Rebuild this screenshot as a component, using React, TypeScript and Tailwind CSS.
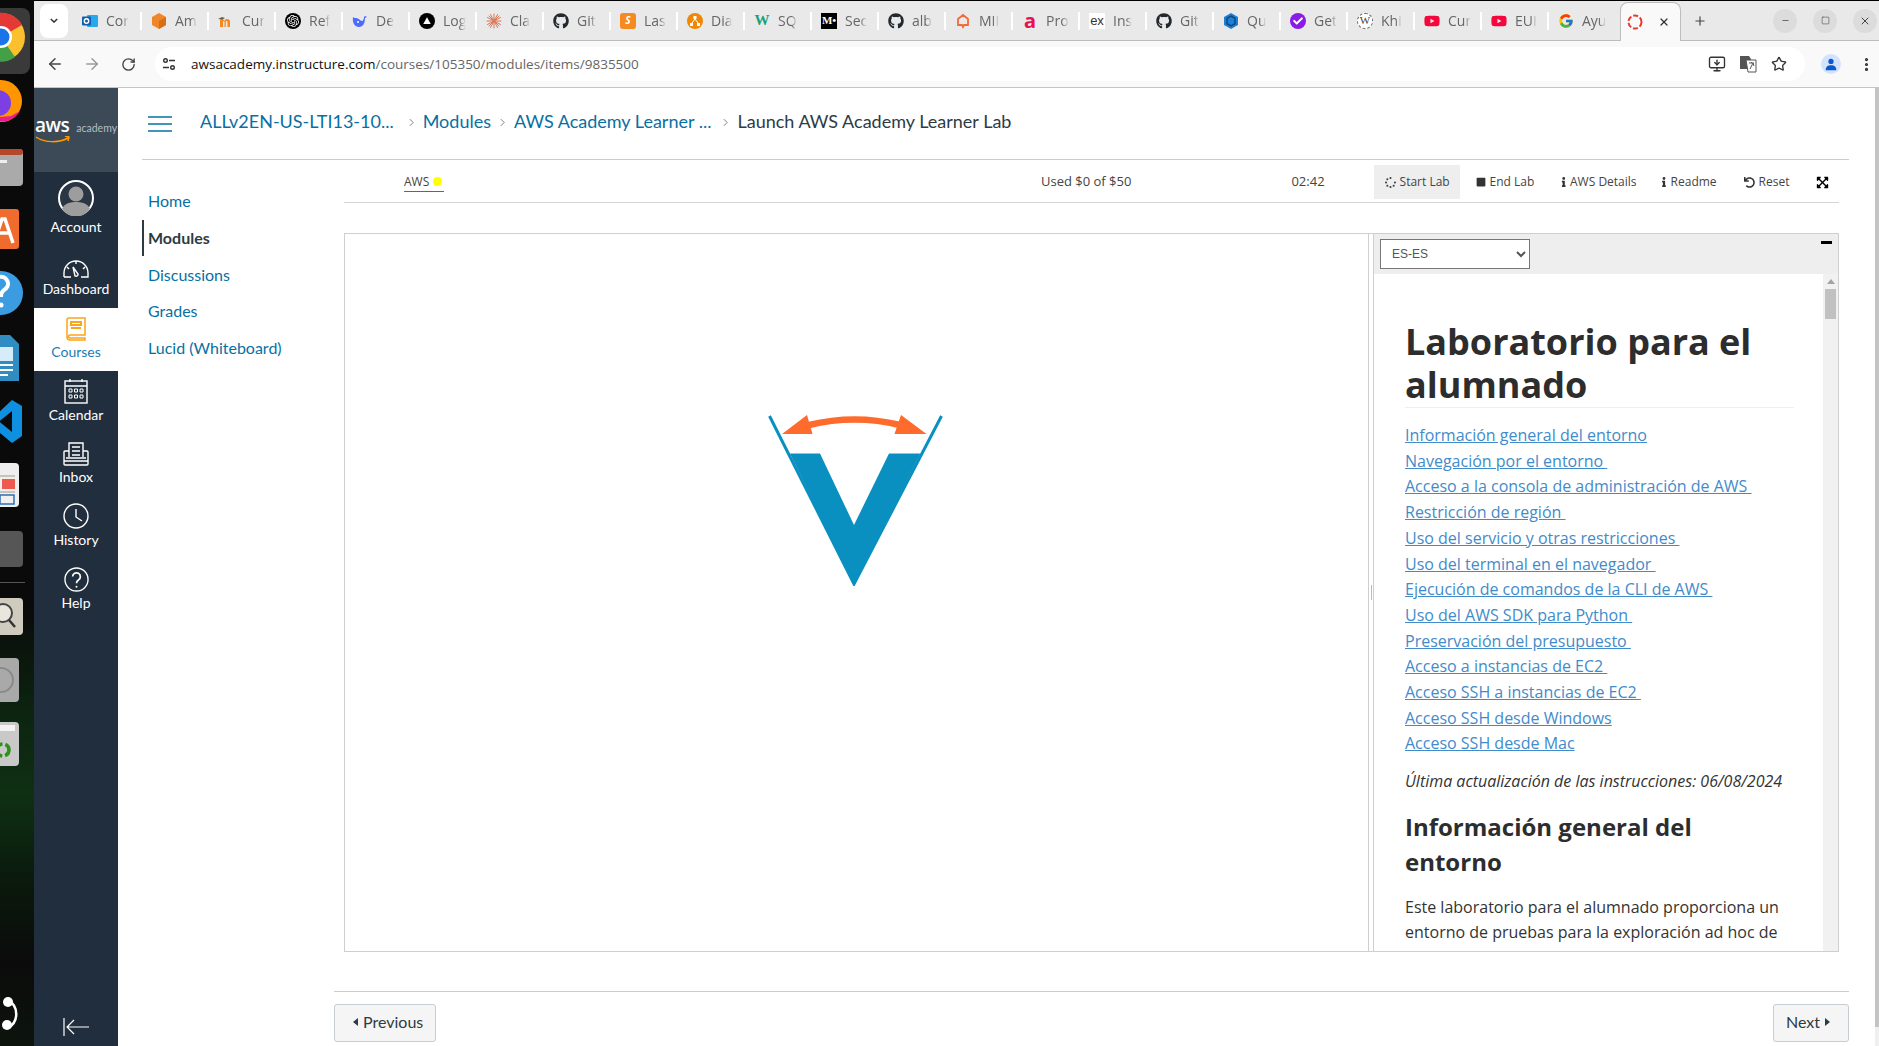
import type { ReactNode } from "react";
import { ArrowLeft, ArrowRight, RotateCw, MonitorDown, Star, EllipsisVertical, X, Plus, Minus, Square } from "lucide-react";
import { FaGithub, FaYoutube, FaSpinner, FaStop, FaInfo, FaUndo, FaExpandArrowsAlt, FaCheck } from "react-icons/fa";
import { FcGoogle } from "react-icons/fc";
import { SiOpenai } from "react-icons/si";

const lato = "font-['Lato',sans-serif]";
const openSans = "font-['Open_Sans',sans-serif]";

const Outlook = () => (
  <svg viewBox="0 0 16 16" className="w-4 h-4">
    <rect x="5" y="2" width="11" height="12" rx="1" fill="#28a8ea" />
    <rect x="0" y="3.5" width="9" height="9" rx="1" fill="#0f5fb0" />
    <circle cx="4.5" cy="8" r="2.2" fill="none" stroke="#fff" strokeWidth="1.4" />
  </svg>
);
const Cube = () => (
  <svg viewBox="0 0 16 16" className="w-4 h-4">
    <path d="M8 0l7 4v8l-7 4-7-4V4z" fill="#f0862a" />
    <path d="M8 8l7-4v8l-7 4z" fill="#d96d12" />
  </svg>
);
const Moodle = () => (
  <svg viewBox="0 0 16 16" className="w-4 h-4">
    <path d="M2 14V8c0-1.5 1-2 2-2s2 .5 2.5 2c.5-1.500 1.500-2 2.500-2 1.500 0 3 .8 3 2.500V14h-2.500V9c0-.6-.3-1-.8-1s-.9.4-.9 1v5H6.500V9c0-.6-.3-1-.8-1S5 8.400 5 9v5z" fill="#f5881f" />
    <path d="M0 6l4-2 3 1-3 1.500z" fill="#6b5a48" />
  </svg>
);
const Knot = () => (
  <span className="w-4 h-4 rounded-full bg-black flex items-center justify-center text-white text-[12px]">
    <SiOpenai />
  </span>
);
const Whale = () => (
  <svg viewBox="0 0 16 16" className="w-4 h-4">
    <path d="M1 4c1 1 2 1 3 1 3 0 4 3 6 3 1 0 2-2 2-4l1-1 2 1-2 1c0 5-2 9-6 9-4 0-7-4-6-10z" fill="#4d6bfe" />
    <circle cx="6" cy="9" r="1" fill="#fff" />
  </svg>
);
const Triangle = () => (
  <span className="w-4 h-4 rounded-full bg-black flex items-center justify-center">
    <svg viewBox="0 0 16 16" className="w-3 h-3"><path d="M8 3l5 9H3z" fill="#fff" /></svg>
  </span>
);
const Burst = () => (
  <svg viewBox="0 0 16 16" className="w-4 h-4" stroke="#d97757" strokeWidth="1" strokeLinecap="round">
    <path d="M8 1v14M1 8h14M3 3l10 10M13 3L3 13M4.500 1.500l7 13M11.500 1.500l-7 13M1.500 4.500l13 7M14.500 4.500l-13 7" />
  </svg>
);
const Github = () => <FaGithub className="w-4 h-4 text-[#24292f]" />;
const Last = () => (
  <span className="w-4 h-4 rounded-[3px] bg-[#f58a1f] flex items-center justify-center text-white text-[10px] font-bold italic">S</span>
);
const Diagram = () => (
  <svg viewBox="0 0 16 16" className="w-4 h-4">
    <circle cx="8" cy="8" r="8" fill="#f08705" />
    <path d="M6.500 3h3v3h-3zM3 10h3v3H3zM10 10h3v3h-3z" fill="#fff" />
    <path d="M8 6l-3 4M8 6l3 4" stroke="#fff" />
  </svg>
);
const GreenW = () => <span className="w-4 h-4 flex items-center justify-center text-[#14a37f] text-[15px] font-black font-['Liberation_Serif',serif]">W</span>;
const Medium = () => (
  <span className="w-4 h-4 bg-black flex items-center justify-center text-white text-[11px] font-bold font-['Liberation_Serif',serif] overflow-hidden">M•</span>
);
const House = () => (
  <svg viewBox="0 0 16 16" className="w-4 h-4" fill="none" stroke="#f26a3a" strokeWidth="1.800">
    <path d="M3 6l5-4 5 4v6H9l-1 2-1-2H3z" />
  </svg>
);
const RedA = () => <span className="w-4 h-4 flex items-center justify-center text-[#e8114f] text-[20px] leading-none font-bold font-['Noto_Sans',sans-serif]">a</span>;
const Ex = () => <span className="w-4 h-4 bg-white flex items-center justify-center text-[#333] text-[13px] font-['Liberation_Sans',sans-serif]">ex</span>;
const Hex = () => (
  <svg viewBox="0 0 16 16" className="w-4 h-4">
    <path d="M8 0l7 4v8l-7 4-7-4V4z" fill="#1f7fd1" />
    <path d="M8 3l4 2.300v5.400L8 13l-4-2.300V5.300z" fill="none" stroke="#0b4a86" strokeWidth="1.500" />
  </svg>
);
const Purple = () => (
  <span className="w-4 h-4 rounded-full bg-[#8a1be8] flex items-center justify-center text-white text-[10px]">
    <FaCheck />
  </span>
);
const Wiki = () => (
  <span className="w-4 h-4 rounded-full border border-dashed border-[#666] bg-white flex items-center justify-center text-[#444] text-[11px] font-['Liberation_Serif',serif]">W</span>
);
const Youtube = () => <FaYoutube className="w-4 h-4 text-[#f5073e]" />;
const Google = () => <FcGoogle className="w-4 h-4" />;

const tabs: [() => ReactNode, string][] = [
  [Outlook, "Cor"], [Cube, "Am"], [Moodle, "Cur"], [Knot, "Ref"], [Whale, "De"],
  [Triangle, "Log"], [Burst, "Cla"], [Github, "Git"], [Last, "Las"], [Diagram, "Dia"],
  [GreenW, "SQ"], [Medium, "Sec"], [Github, "alb"], [House, "MII"], [RedA, "Pro"],
  [Ex, "Ins"], [Github, "Git"], [Hex, "Qu"], [Purple, "Get"], [Wiki, "Khi"],
  [Youtube, "Cur"], [Youtube, "EUI"], [Google, "Ayu"],
];

function Dock() {
  return (
    <div className="w-[34px] shrink-0 bg-[linear-gradient(180deg,#0a0a0a_0%,#0a0a0a_58%,#0c2410_68%,#0f3013_76%,#0a1a0c_84%,#0b0b0b_92%,#0c140d_100%)]">
      <svg viewBox="0 0 34 1046" className="w-[34px] h-[1046px] block">
        <rect x="-20" y="8" width="50" height="66" rx="8" fill="#3a3a3a" />
        <circle cx="1" cy="37" r="24" fill="#fbc02d" />
        <path d="M1 37L22 25A24 24 0 0 0-15 19z" fill="#e53935" />
        <path d="M1 37L-8 60A24 24 0 0 0 15 57z" fill="#43a047" />
        <circle cx="1" cy="37" r="11" fill="#fff" />
        <circle cx="1" cy="37" r="8.500" fill="#1a73e8" />
        <circle cx="1" cy="101" r="21" fill="#ff9500" />
        <circle cx="-2" cy="103" r="13" fill="#7b3fe4" />
        <path d="M-10 118a21 21 0 0 0 30-7l-9 5z" fill="#e91e8c" />
        <rect x="-20" y="149" width="43" height="37" rx="4" fill="#aaa" />
        <rect x="-20" y="149" width="43" height="6" rx="3" fill="#b5472a" />
        <rect x="-10" y="160" width="17" height="3" fill="#eee" />
        <rect x="-20" y="209" width="39" height="40" rx="3" fill="#ef6c2e" />
        <path d="M-6 243l8-24h3l8 24M-2 233h11" fill="none" stroke="#fff" strokeWidth="3.500" />
        <circle cx="1" cy="293" r="22" fill="#3b9ce2" />
        <path d="M-6 284a7 7 0 1 1 10 6c-2 1.500-3 3-3 7" fill="none" stroke="#fff" strokeWidth="4" />
        <circle cx="1" cy="305" r="2.500" fill="#fff" />
        <path d="M-20 335h30l9 9v37h-39z" fill="#2f8dc2" />
        <rect x="-14" y="347" width="27" height="14" fill="#d6ecf8" />
        <rect x="-14" y="364" width="27" height="2" fill="#fff" />
        <rect x="-14" y="369" width="27" height="2" fill="#fff" />
        <rect x="-14" y="374" width="22" height="2" fill="#fff" />
        <path d="M12 400l10 6v30l-10 7-18-15-8 6-5-3v-17l5-3 8 6z" fill="#0f8fe0" />
        <path d="M12 411v21l-13-10.500z" fill="#0a0a0a" />
        <rect x="-20" y="463" width="39" height="44" rx="4" fill="#efefef" />
        <rect x="-14" y="475" width="29" height="2" fill="#c9c5b5" />
        <rect x="2" y="479" width="13" height="10" fill="#ee5a50" />
        <rect x="-14" y="491" width="29" height="2" fill="#c9c5b5" />
        <rect x="0" y="495" width="14" height="9" fill="none" stroke="#2f6fb5" strokeWidth="1.500" />
        <rect x="-20" y="531" width="43" height="36" rx="4" fill="#565656" />
        <rect x="-4" y="582" width="29" height="1" fill="#555" />
        <rect x="-20" y="598" width="43" height="37" rx="4" fill="#cfccbf" />
        <circle cx="3" cy="613" r="9" fill="#e8e6dd" stroke="#444" strokeWidth="2" />
        <path d="M9 620l6 7" stroke="#333" strokeWidth="2.500" />
        <rect x="-20" y="658" width="39" height="44" rx="4" fill="#a9a9a9" />
        <circle cx="1" cy="680" r="12" fill="none" stroke="#8a8a8a" strokeWidth="2" />
        <rect x="-20" y="722" width="39" height="44" rx="4" fill="#c9c9c9" />
        <rect x="-14" y="725" width="29" height="6" fill="#f3f3f3" />
        <circle cx="3" cy="750" r="6" fill="none" stroke="#2e9118" strokeWidth="3.500" strokeDasharray="7 3" />
        <path d="M8 1000a16 16 0 0 1 0 28" fill="none" stroke="#fff" strokeWidth="2.500" />
        <path d="M-2 998a16 16 0 0 1 2 0M-2 1030a16 16 0 0 0 2 0" fill="none" stroke="#fff" strokeWidth="2.500" />
        <circle cx="8" cy="1002" r="5" fill="#fff" />
        <circle cx="7" cy="1025" r="5" fill="#fff" />
      </svg>
    </div>
  );
}

function Chrome() {
  return (
    <>
      <div className="h-[41px] shrink-0 border-t border-black border-b border-b-[#bdbdbd] bg-[#e9e9e9] flex items-center pl-[6px]">
        <div className="w-[28px] h-[34px] rounded-lg bg-white flex items-center justify-center mr-[5px]">
          <svg viewBox="0 0 10 6" className="w-[8px] h-[5px]" fill="none" stroke="#333" strokeWidth="1.800"><path d="M1 1l4 4 4-4" /></svg>
        </div>
        {tabs.map(([Icon, title], i) => (
          <div key={i} className={`w-[67px] shrink-0 h-[18px] flex items-center gap-[8px] pl-[9px] ${i === 0 ? "" : "border-l-2 border-l-white"}`}>
            <span className="w-4 h-4 shrink-0 flex items-center justify-center"><Icon /></span>
            <span className={`${openSans} text-[14px] text-[#666] whitespace-nowrap [mask-image:linear-gradient(to_right,black_70%,transparent)]`}>{title}</span>
          </div>
        ))}
        <div className="w-[61px] h-[40px] ml-[6px] mt-[1px] -mb-[1px] rounded-t-lg bg-[#f9f9f9] border border-[#bdbdbd] border-b-0 flex items-center pl-[6px] shrink-0">
          <svg viewBox="0 0 16 16" className="w-4 h-4" fill="none" stroke="#ea3a2d" strokeWidth="2" strokeDasharray="5 2"><circle cx="8" cy="8" r="6.500" /></svg>
          <X className="w-[12px] h-[12px] text-[#333] ml-[15px]" strokeWidth={2.500} />
        </div>
        <Plus className="w-[14px] h-[14px] text-[#444] ml-[12px]" strokeWidth={2} />
        <div className="ml-auto flex items-center gap-[16px] pr-[2px]">
          <span className="w-[24px] h-[24px] rounded-full bg-[#dcdcdc] flex items-center justify-center"><Minus className="w-[9px] h-[9px] text-[#444]" strokeWidth={2} /></span>
          <span className="w-[24px] h-[24px] rounded-full bg-[#dcdcdc] flex items-center justify-center"><Square className="w-[9px] h-[9px] text-[#444]" strokeWidth={1.500} /></span>
          <span className="w-[24px] h-[24px] rounded-full bg-[#dcdcdc] flex items-center justify-center"><X className="w-[12px] h-[12px] text-[#444]" strokeWidth={2} /></span>
        </div>
      </div>
      <div className="h-[47px] shrink-0 bg-[#f9f9f9] border-b border-[#c4c4c4] flex items-center">
        <ArrowLeft className="w-[18px] h-[18px] text-[#444] ml-[12px]" strokeWidth={2} />
        <ArrowRight className="w-[18px] h-[18px] text-[#9a9a9a] ml-[19px]" strokeWidth={2} />
        <RotateCw className="w-[15px] h-[15px] text-[#444] ml-[20px]" strokeWidth={2.200} />
        <div className="ml-[19px] h-[34px] w-[1650px] rounded-full bg-white flex items-center pl-[5px]">
          <svg viewBox="0 0 16 16" className="w-[16px] h-[16px] ml-[1px]" fill="none" stroke="#333" strokeWidth="1.400">
            <circle cx="4.500" cy="4.500" r="1.800" /><path d="M8 4.500h6M2 11.500h6" /><circle cx="11.500" cy="11.500" r="1.800" />
          </svg>
          <span className={`${openSans} text-[13.500px] ml-[14px] whitespace-nowrap text-[#111]`}>
            awsacademy.instructure.com<span className="text-[#666]">/courses/105350/modules/items/9835500</span>
          </span>
          <MonitorDown className="w-[18px] h-[18px] text-[#333] ml-auto" strokeWidth={1.800} />
          <svg viewBox="0 0 18 18" className="w-[18px] h-[18px] ml-[13px]">
            <path d="M1 1h9l2 3v10H1z" fill="#555" />
            <path d="M7 5h10v12H9z" fill="#fff" stroke="#555" />
            <path d="M10 8h5M12.500 7v1M11 14l3-6 1 3" fill="none" stroke="#555" />
          </svg>
          <Star className="w-[16px] h-[16px] text-[#333] ml-[14px] mr-[18px]" strokeWidth={2} />
        </div>
        <span className="w-[20px] h-[20px] rounded-full bg-[#d3e3fd] flex items-center justify-center ml-[16px]">
          <svg viewBox="0 0 16 16" className="w-[14px] h-[14px]" fill="#0b57d0"><circle cx="8" cy="5" r="3" /><path d="M2 15c0-4 2.500-5.500 6-5.500s6 1.500 6 5.500z" /></svg>
        </span>
        <EllipsisVertical className="w-[17px] h-[17px] text-[#333] ml-[17px]" strokeWidth={2.500} />
      </div>
    </>
  );
}

function NavItem({ label, icon, active, className }: { label: string; icon: ReactNode; active?: boolean; className?: string }) {
  return (
    <div className={`flex flex-col items-center justify-end pb-[10px] text-[14px] ${active ? "bg-white text-[#1c7cb4]" : "text-white"} ${className ?? "h-[62.700px]"}`}>
      {icon}
      <span className="leading-[18px] mt-[2px]">{label}</span>
    </div>
  );
}

function GlobalNav() {
  const s = { fill: "none", stroke: "#fff", strokeWidth: 1.400 };
  return (
    <div className={`${lato} w-[84px] shrink-0 bg-[#212e3e] flex flex-col`}>
      <div className="h-[84px] shrink-0 bg-[#3c4a57] pt-[27px] pl-[1px] overflow-hidden">
        <div className="flex items-baseline whitespace-nowrap">
          <span className="text-white text-[19px] font-['Open_Sans',sans-serif] font-semibold leading-[20px] tracking-[-0.5px]">aws</span>
          <span className="text-[#b5bdc4] text-[10.500px] ml-[7px]">academy</span>
        </div>
        <svg viewBox="0 0 36 8" className="w-[36px] h-[8px] -mt-[1px]" fill="none" stroke="#f90" strokeWidth="1.500"><path d="M1 1c9 6 23 6 32 1M30 0l4 1-1 4" /></svg>
      </div>
      <NavItem className="h-[73.500px]" label="Account" icon={
        <svg viewBox="0 0 36 36" className="w-[36px] h-[36px]">
          <circle cx="18" cy="18" r="17" fill="#2a3644" stroke="#fff" strokeWidth="2" />
          <circle cx="18" cy="14" r="7.500" fill="#9d9d9d" />
          <path d="M4 29c2-6 9-7 14-7s12 1 14 7a17 17 0 0 1-28 0z" fill="#9d9d9d" />
        </svg>
      } />
      <NavItem label="Dashboard" icon={
        <svg viewBox="0 0 26 19" className="w-[26px] h-[19px]" {...s}>
          <path d="M1 18v-4a12 12 0 0 1 24 0v4h-7M8 18H1" />
          <path d="M13 2v3M4 8l2 2M22 8l-2 2" />
          <path d="M10 8l5 7a2 2 0 0 1-3 2z" />
        </svg>
      } />
      <NavItem active label="Courses" icon={
        <svg viewBox="0 0 20 24" className="w-[20px] h-[24px]" fill="none" stroke="#f9a51f" strokeWidth="1.500">
          <path d="M19 1H3a2 2 0 0 0-2 2v17a3 3 0 0 0 3 3h15v-2H4a1.500 1.500 0 0 1 0-3h15z" />
          <path d="M5 5h10v3H5zM5 11h10" strokeWidth="2" />
        </svg>
      } />
      <NavItem label="Calendar" icon={
        <svg viewBox="0 0 24 26" className="w-[24px] h-[26px]" {...s}>
          <rect x="1" y="3" width="22" height="22" />
          <path d="M6 1v3M18 1v3M1 8h22" />
          <path d="M5 11h3v3H5zM10.500 11h3v3h-3zM16 11h3v3h-3zM5 17h3v3H5zM10.500 17h3v3h-3zM16 17h3v3h-3z" strokeWidth="1" />
        </svg>
      } />
      <NavItem label="Inbox" icon={
        <svg viewBox="0 0 26 24" className="w-[26px] h-[24px]" {...s}>
          <path d="M6 15V1h14v14M6 9H2a1 1 0 0 0-1 1v12a1 1 0 0 0 1 1h22a1 1 0 0 0 1-1V10a1 1 0 0 0-1-1h-4" />
          <path d="M1 19h24M3 16h20M9 5h8M9 9h8M9 13h8" />
        </svg>
      } />
      <NavItem label="History" icon={
        <svg viewBox="0 0 26 26" className="w-[26px] h-[26px]" {...s}>
          <circle cx="13" cy="13" r="12" /><path d="M13 6v8l6 4" />
        </svg>
      } />
      <NavItem label="Help" icon={
        <svg viewBox="0 0 26 26" className="w-[25px] h-[25px]" {...s}>
          <circle cx="13" cy="13" r="12" /><path d="M9 10a4 4 0 1 1 6 3.500c-1.500 1-2 1.500-2 3.500" strokeWidth="1.800" /><circle cx="13" cy="20.500" r="1" fill="#fff" stroke="none" />
        </svg>
      } />
      <div className="mt-auto pb-[10px] flex justify-center">
        <svg viewBox="0 0 26 18" className="w-[26px] h-[18px]" fill="none" stroke="#fff" strokeWidth="1.200"><path d="M1 0v18M26 9H4M11 2L4 9l7 7" /></svg>
      </div>
    </div>
  );
}

const Chevron = () => (
  <svg viewBox="0 0 6 10" className="w-[5px] h-[9px] mx-[9px] mt-[2px]" fill="none" stroke="#666"><path d="M1 1l4 4-4 4" /></svg>
);

function LabButton({ icon, label, className }: { icon: ReactNode; label: string; className: string }) {
  return (
    <div className={`flex items-center gap-[4px] h-[34px] whitespace-nowrap ${className}`}>
      {icon}
      <span>{label}</span>
    </div>
  );
}

const links = [
  "Información general del entorno",
  "Navegación por el entorno\u00a0",
  "Acceso a la consola de administración de AWS\u00a0",
  "Restricción de región\u00a0",
  "Uso del servicio y otras restricciones\u00a0",
  "Uso del terminal en el navegador\u00a0",
  "Ejecución de comandos de la CLI de AWS\u00a0",
  "Uso del AWS SDK para Python\u00a0",
  "Preservación del presupuesto\u00a0",
  "Acceso a instancias de EC2\u00a0",
  "Acceso SSH a instancias de EC2\u00a0",
  "Acceso SSH desde Windows",
  "Acceso SSH desde Mac",
];

function LabPanel() {
  return (
    <div className="mx-[10px] mt-[30px] h-[719px] border border-[#cfcfcf] flex overflow-hidden">
      <div className="w-[1023px] shrink-0 pt-[180px] pr-[3px] flex justify-center">
        <svg viewBox="0 0 180 172" className="w-[180px] h-[172px] block">
          <path d="M4.500 2L89 170 176.500 2" fill="none" stroke="#0a90c0" strokeWidth="3" />
          <path d="M25 39.500h30L89 111l35-71.500h31.500L89 170z" fill="#0a90c0" />
          <path d="M44 11Q89.500 0 135 11" fill="none" stroke="#ff6b2c" strokeWidth="6.500" />
          <path d="M17 20L42 1l5.500 19zM161.500 20L136 1l-6.500 19z" fill="#ff6b2c" />
        </svg>
      </div>
      <div className="w-[6px] shrink-0 border-l border-[#cfcfcf] border-r flex items-center justify-center">
        <span className="w-[1px] h-[15px] bg-[#bbb]" />
      </div>
      <div className="flex-1 flex flex-col min-w-0">
        <div className="h-[40px] shrink-0 bg-[#eeeeee] flex pl-[6px] pt-[5px] pr-[6px]">
          <select defaultValue="ES-ES" className="w-[150px] h-[30px] border border-[#767676] bg-white pl-[7px] text-[12px] text-[#555] font-['Liberation_Sans',sans-serif]">
            <option>ES-ES</option>
          </select>
          <span className="ml-auto w-[11px] h-[3px] bg-black mt-[2px]" />
        </div>
        <div className="flex-1 flex min-h-0">
          <div className={`${openSans} w-[449px] shrink-0 pl-[31px] pr-[29px] pt-[46px] text-[16px] leading-[25.700px] text-[#333] overflow-hidden`}>
            <h1 className="text-[36px] leading-[43px] font-bold text-[#2d2d2d] border-b border-[#eeeeee] pb-[1px] mb-[15px]">Laboratorio para el alumnado</h1>
            {links.map((t) => (
              <div key={t}><a className="text-[#428bca] underline">{t}</a></div>
            ))}
            <p className="italic mt-[12px]">Última actualización de las instrucciones: 06/08/2024</p>
            <h2 className="text-[24px] leading-[35.400px] font-bold text-[#2d2d2d] mt-[14px]">Información general del entorno</h2>
            <p className="mt-[15px]">Este laboratorio para el alumnado proporciona un entorno de pruebas para la exploración ad hoc de</p>
          </div>
          <div className="w-[15px] shrink-0 bg-[#f1f1f1] flex flex-col items-center">
            <svg viewBox="0 0 8 5" className="w-[8px] h-[5px] mt-[5px]"><path d="M4 0l4 5H0z" fill="#a3a3a3" /></svg>
            <span className="w-[11px] h-[30px] bg-[#c1c1c1] mt-[5px]" />
          </div>
        </div>
      </div>
    </div>
  );
}

function Main() {
  return (
    <div className="flex-1 flex min-w-0 bg-white">
      <div className="flex-1 min-w-0 pl-[24px] pr-[26px] flex flex-col">
        <div className={`${lato} h-[72px] shrink-0 border-b border-[#c7cdd1] flex items-center pl-[6px] text-[18px] text-[#0770a3]`}>
          <svg viewBox="0 0 24 16" className="w-[24px] h-[16px] mr-[28px]" fill="none" stroke="#0770a3" strokeWidth="1.500"><path d="M0 1h24M0 8h24M0 15h24" /></svg>
          <div className="flex items-center mb-[4px]">
            <span>ALLv2EN-US-LTI13-10...</span>
            <span className="w-[6px]" />
            <Chevron />
            <span>Modules</span>
            <Chevron />
            <span className="mr-[3px]">AWS Academy Learner ...</span>
            <Chevron />
            <span className="text-[#2d3b45]">Launch AWS Academy Learner Lab</span>
          </div>
        </div>
        <div className="flex-1 flex min-h-0">
          <div className={`${lato} w-[192px] shrink-0 pt-[23px] text-[16px] text-[#0770a3]`}>
            {["Home", "Modules", "Discussions", "Grades", "Lucid (Whiteboard)"].map((n) => (
              <div key={n} className={`h-[36.700px] flex items-center pl-[4px] ${n === "Modules" ? "border-l-2 border-[#2d3b45] font-bold text-[#2d3b45]" : "ml-[2px]"}`}>{n}</div>
            ))}
          </div>
          <div className="flex-1 min-w-0 flex flex-col">
            <div className={`${openSans} mx-[10px] h-[43px] shrink-0 border-b border-[#d5d5d5] pt-[2px] flex items-center text-[12px] text-[#444]`}>
              <span className="ml-[60px] w-[40px] h-[19px] border-b border-[#666] flex items-center gap-[4px]">
                AWS <span className="w-[9px] h-[9px] rounded-full bg-[#ffff00]" />
              </span>
              <span className="ml-[597px] text-[13px]">Used $0 of $50</span>
              <span className="ml-[160px] text-[13px]">02:42</span>
              <LabButton className="ml-[49px] w-[86px] bg-[#eeeeee] pl-[11px]" icon={<FaSpinner className="w-[11px] h-[11px]" />} label="Start Lab" />
              <LabButton className="ml-[16px] w-[60px]" icon={<FaStop className="w-[10px] h-[10px] text-[#333]" />} label="End Lab" />
              <LabButton className="ml-[25px] w-[76px] gap-[2px]" icon={<FaInfo className="w-[8px] h-[10px] text-[#333]" />} label="AWS Details" />
              <LabButton className="ml-[24px] w-[56px] gap-[2px]" icon={<FaInfo className="w-[8px] h-[10px] text-[#333]" />} label="Readme" />
              <LabButton className="ml-[27px] w-[46px] gap-[2px]" icon={<FaUndo className="w-[11px] h-[11px] text-[#333]" />} label="Reset" />
              <FaExpandArrowsAlt className="ml-[26px] w-[13px] h-[13px] text-black" />
            </div>
            <LabPanel />
            <div className={`${lato} mt-[39px] border-t border-[#c7cdd1] pt-[12px] flex justify-between text-[16px] text-[#2d3b45]`}>
              <div className="h-[38px] w-[102px] rounded-[3px] border border-[#c7cdd1] bg-[#f5f5f5] flex items-center pl-[18px] pb-[2px] gap-[5px]">
                <svg viewBox="0 0 5 8" className="w-[5px] h-[8px]"><path d="M5 0v8L0 4z" fill="#2d3b45" /></svg>
                Previous
              </div>
              <div className="h-[38px] w-[76px] rounded-[3px] border border-[#c7cdd1] bg-[#f5f5f5] flex items-center pl-[12px] pb-[2px] gap-[5px]">
                Next
                <svg viewBox="0 0 5 8" className="w-[5px] h-[8px]"><path d="M0 0v8l5-4z" fill="#2d3b45" /></svg>
              </div>
            </div>
          </div>
        </div>
      </div>
      <div className="w-[4px] shrink-0 flex flex-col">
        <div className="h-[939px] bg-[#c4c4c4]" />
        <div className="flex-1 bg-[#efefef]" />
      </div>
    </div>
  );
}

export default function App() {
  return (
    <div className="h-screen flex overflow-hidden bg-white">
      <Dock />
      <div className="flex-1 flex flex-col min-w-0">
        <Chrome />
        <div className="flex-1 flex min-h-0">
          <GlobalNav />
          <Main />
        </div>
      </div>
    </div>
  );
}
